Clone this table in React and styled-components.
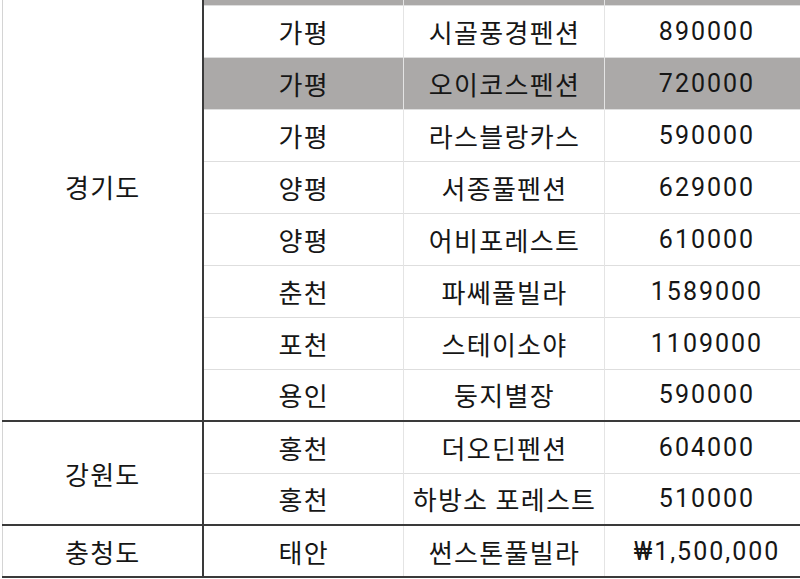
import React from "react";
import styled, { createGlobalStyle } from "styled-components";

const GlobalStyle = createGlobalStyle`
  html, body {
    margin: 0;
    padding: 0;
    background: #ffffff;
  }
  body {
    font-family: Roboto, "Noto Sans CJK KR", sans-serif;
  }
`;

const Viewport = styled.div`
  width: 800px;
  height: 579px;
  overflow: hidden;
  background: #ffffff;
`;

const Table = styled.table`
  border-collapse: collapse;
  table-layout: fixed;
  width: 806px;
  margin-top: -47px;
  margin-left: 2px;
  color: #161616;
  font-size: 26px;
`;

const Col = styled.col`
  width: ${(p) => p.$w}px;
`;

const Row = styled.tr`
  height: 52px;
  background: ${(p) => (p.$shaded ? "#aba9a8" : "#ffffff")};
  border-bottom: ${(p) => (p.$last ? "2px solid #3a3a3a" : "1px solid #dedede")};
`;

const RegionCell = styled.td`
  padding: 0 0 0 1px;
  text-align: center;
  vertical-align: middle;
  background: #ffffff;
  border-left: 1px solid #d4d4d4;
  border-right: 2px solid #3a3a3a;
  border-bottom: 2px solid #3a3a3a;
  font-family: "Noto Sans CJK KR", sans-serif;
  letter-spacing: 1.3px;
`;

const Cell = styled.td`
  padding: 0 0 0 1px;
  text-align: center;
  vertical-align: middle;
  border-right: 1px solid #e4e4e4;
  font-family: ${(p) => (p.$num ? "Roboto, \"Noto Sans CJK KR\", sans-serif" : "\"Noto Sans CJK KR\", sans-serif")};
  font-size: ${(p) => (p.$num ? "25px" : "26px")};
  letter-spacing: ${(p) => (p.$num ? "2px" : "1.3px")};
`;

const regions = [
  {
    name: "경기도",
    rows: [
      { area: "", place: "", price: "", shaded: true },
      { area: "가평", place: "시골풍경펜션", price: "890000" },
      { area: "가평", place: "오이코스펜션", price: "720000", shaded: true },
      { area: "가평", place: "라스블랑카스", price: "590000" },
      { area: "양평", place: "서종풀펜션", price: "629000" },
      { area: "양평", place: "어비포레스트", price: "610000" },
      { area: "춘천", place: "파쎄풀빌라", price: "1589000" },
      { area: "포천", place: "스테이소야", price: "1109000" },
      { area: "용인", place: "둥지별장", price: "590000" },
    ],
  },
  {
    name: "강원도",
    rows: [
      { area: "홍천", place: "더오딘펜션", price: "604000" },
      { area: "홍천", place: "하방소 포레스트", price: "510000" },
    ],
  },
  {
    name: "충청도",
    rows: [{ area: "태안", place: "썬스톤풀빌라", price: "₩1,500,000" }],
  },
];

export default function App() {
  return (
    <Viewport>
      <GlobalStyle />
      <Table>
        <colgroup>
          <Col $w={200} />
          <Col $w={201} />
          <Col $w={201} />
          <Col $w={204} />
        </colgroup>
        <tbody>
          {regions.map((region) =>
            region.rows.map((row, i) => (
              <Row
                key={region.name + i}
                $shaded={row.shaded}
                $last={i === region.rows.length - 1}
              >
                {i === 0 && (
                  <RegionCell rowSpan={region.rows.length}>{region.name}</RegionCell>
                )}
                <Cell>{row.area}</Cell>
                <Cell>{row.place}</Cell>
                <Cell $num>{row.price}</Cell>
              </Row>
            ))
          )}
        </tbody>
      </Table>
    </Viewport>
  );
}
